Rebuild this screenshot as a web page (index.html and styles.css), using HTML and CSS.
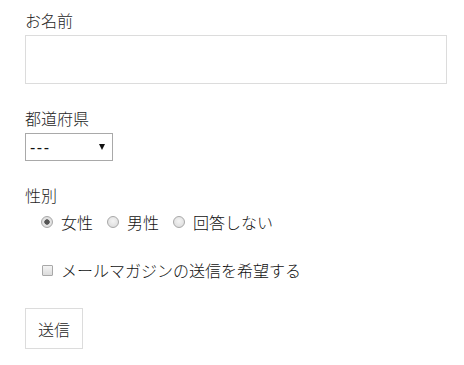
FILE: index.html
```
<!DOCTYPE html>
<html lang="ja">
<head>
<meta charset="utf-8">
<link rel="stylesheet" href="styles.css">
</head>
<body>
<form class="form">
  <div class="field">
    <label class="label" for="name">お名前</label>
    <input class="text-input" id="name" type="text">
  </div>
  <div class="field">
    <label class="label" for="pref">都道府県</label>
    <div class="select-wrap">
      <select class="select" id="pref">
        <option>---</option>
      </select>
    </div>
  </div>
  <div class="field">
    <span class="label">性別</span>
    <div class="radios">
      <label class="choice"><input class="radio" type="radio" name="gender" checked><span>女性</span></label>
      <label class="choice"><input class="radio" type="radio" name="gender"><span>男性</span></label>
      <label class="choice"><input class="radio" type="radio" name="gender"><span>回答しない</span></label>
    </div>
  </div>
  <div class="check-row">
    <label class="choice"><input class="checkbox" type="checkbox"><span>メールマガジンの送信を希望する</span></label>
  </div>
  <button class="submit" type="button">送信</button>
</form>
</body>
</html>
```
FILE: styles.css
```
html, body {
  margin: 0;
  padding: 0;
  background: #fff;
}
body {
  font-family: "Noto Sans CJK JP", "Noto Sans", sans-serif;
  font-size: 16px;
  font-weight: 300;
  color: #1e1e1e;
}
.form {
  padding: 8px 17px 0 25px;
  display: flex;
  flex-direction: column;
  align-items: flex-start;
}
.field {
  display: flex;
  flex-direction: column;
  align-items: flex-start;
  gap: 3px;
  margin-bottom: 22px;
}
.field:first-child {
  align-self: stretch;
}
.label {
  display: block;
  line-height: 24px;
  height: 24px;
}
.text-input {
  box-sizing: border-box;
  width: 422px;
  height: 49px;
  border: 1px solid #dcdcdc;
  margin: 0;
  padding: 0 6px;
  font: inherit;
  outline: none;
}
.select-wrap {
  position: relative;
  width: 88px;
  height: 28px;
}
.select-wrap::after {
  content: "";
  position: absolute;
  right: 8px;
  top: 11px;
  border-left: 3.5px solid transparent;
  border-right: 3.5px solid transparent;
  border-top: 6px solid #111;
  pointer-events: none;
}
.select {
  appearance: none;
  -webkit-appearance: none;
  box-sizing: border-box;
  width: 88px;
  height: 28px;
  border: 1px solid #a9a9a9;
  border-radius: 0;
  background: #fff;
  margin: 0;
  padding: 0 4px;
  font-family: "Liberation Sans", sans-serif;
  font-size: 16px;
  letter-spacing: 1.5px;
  color: #111;
}
.radios {
  display: flex;
  align-items: center;
  padding-left: 16px;
  gap: 14px;
  height: 24px;
}
.choice {
  display: flex;
  align-items: center;
  gap: 8px;
  line-height: 24px;
  color: #111;
}
.radio {
  appearance: none;
  -webkit-appearance: none;
  box-sizing: border-box;
  width: 12px;
  height: 12px;
  margin: 0;
  border-radius: 50%;
  border: 1px solid #a8a8a8;
  background: radial-gradient(circle at 50% 40%, #f4f4f4, #d8d8d8);
}
.radio:checked {
  background: radial-gradient(circle, #555 0, #555 2.4px, #e6e6e6 3px, #d4d4d4 100%);
}
.check-row {
  padding-left: 17px;
  margin-top: 2px;
  margin-bottom: 26px;
}
.checkbox {
  appearance: none;
  -webkit-appearance: none;
  box-sizing: border-box;
  width: 11px;
  height: 11px;
  margin: 0;
  border: 1px solid #a8a8a8;
  border-radius: 1px;
  background: linear-gradient(#f4f4f4, #dcdcdc);
}
.submit {
  box-sizing: border-box;
  width: 58px;
  height: 41px;
  border: 1px solid #dcdcdc;
  background: #fff;
  margin: 0;
  padding: 0;
  font: inherit;
  color: #1e1e1e;
}
```
